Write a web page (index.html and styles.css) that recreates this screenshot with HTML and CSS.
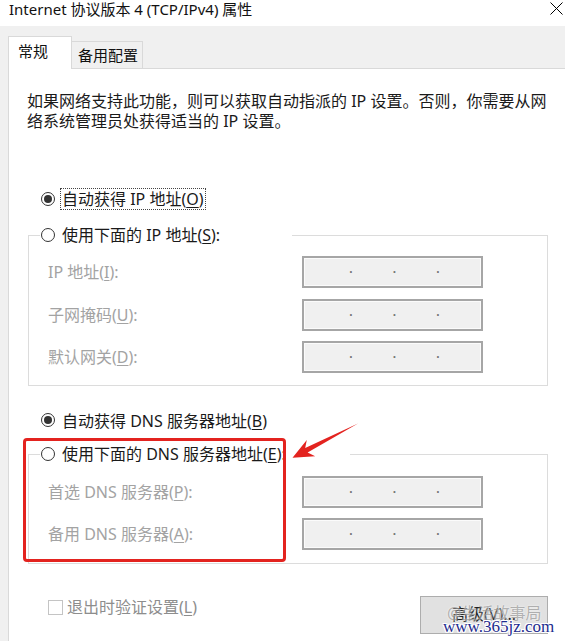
FILE: index.html
```html
<!DOCTYPE html>
<html lang="zh-CN">
<head>
<meta charset="utf-8">
<title>Internet 协议版本 4 (TCP/IPv4) 属性</title>
<link rel="stylesheet" href="styles.css">
</head>
<body>
<div class="window">
  <div class="titlebar">
    <span class="title">Internet 协议版本 4 (TCP/IPv4) 属性</span>
    <svg class="close" width="13" height="13" viewBox="0 0 13 13"><path d="M0.5 0.5 L12.5 12.5 M12.5 0.5 L0.5 12.5" stroke="#000" stroke-width="1" fill="none"/></svg>
  </div>
  <div class="tabstrip">
    <div class="tab active">常规</div>
    <div class="tab">备用配置</div>
  </div>
  <div class="panel">
    <p class="desc">如果网络支持此功能，则可以获取自动指派的 IP 设置。否则，你需要从网络系统管理员处获得适当的 IP 设置。</p>

    <div class="option first">
      <span class="radio checked"></span><span class="focus">自动获得 IP 地址(<u>O</u>)</span>
    </div>

    <fieldset class="group g1">
      <legend class="legend l1"><span class="radio"></span><span>使用下面的 IP 地址(<u>S</u>):</span></legend>
      <div class="fields">
        <span class="lbl">IP 地址(<u>I</u>):</span>
        <div class="ip"><span class="dot">.</span><span class="dot">.</span><span class="dot">.</span></div>
        <span class="lbl">子网掩码(<u>U</u>):</span>
        <div class="ip"><span class="dot">.</span><span class="dot">.</span><span class="dot">.</span></div>
        <span class="lbl">默认网关(<u>D</u>):</span>
        <div class="ip"><span class="dot">.</span><span class="dot">.</span><span class="dot">.</span></div>
      </div>
    </fieldset>

    <div class="option second">
      <span class="radio checked"></span><span>自动获得 DNS 服务器地址(<u>B</u>)</span>
    </div>

    <fieldset class="group g2">
      <legend class="legend l2"><span class="radio"></span><span>使用下面的 DNS 服务器地址(<u>E</u>):</span></legend>
      <div class="fields f2">
        <span class="lbl">首选 DNS 服务器(<u>P</u>):</span>
        <div class="ip"><span class="dot">.</span><span class="dot">.</span><span class="dot">.</span></div>
        <span class="lbl">备用 DNS 服务器(<u>A</u>):</span>
        <div class="ip"><span class="dot">.</span><span class="dot">.</span><span class="dot">.</span></div>
      </div>
    </fieldset>

    <div class="footer">
      <div class="check"><span class="box"></span><span>退出时验证设置(<u>L</u>)</span></div>
      <div class="btn">高级(<u>V</u>)...</div>
    </div>
  </div>

  <div class="redbox"></div>
  <svg class="arrow" width="80" height="50" viewBox="288 418 80 50">
    <polygon points="358,423.5 307.6,452.6 315.2,456.2 292.5,457.8 306.8,440 305.2,448" fill="#e3231f"/>
  </svg>
  <div class="wm-faint">@生活故事局</div>
  <div class="wm">www.365jz.com</div>
</div>
</body>
</html>
```
FILE: styles.css
```css
* { box-sizing: border-box; }
html, body {
  margin: 0;
  padding: 0;
}
body {
  width: 565px;
  height: 641px;
  overflow: hidden;
  background: #f0f0f0;
  font-family: "Noto Sans", "Noto Sans CJK SC", sans-serif;
  font-size: 16px;
  color: #1a1a1a;
}
u { text-decoration: underline; text-underline-offset: 2px; text-decoration-thickness: 1px; }

.window {
  position: relative;
  width: 565px;
  height: 641px;
}

.titlebar {
  height: 26px;
  background: #fff;
  display: flex;
  justify-content: space-between;
  align-items: flex-start;
  padding: 0 2px 0 9px;
}
.title {
  font-size: 15px;
  line-height: 18px;
  color: #111;
}
.close { margin-top: 2px; }

.tabstrip {
  height: 42px;
  display: flex;
  align-items: flex-end;
  padding-left: 8px;
}
.tab {
  font-size: 15px;
  line-height: 20px;
  color: #111;
}
.tab.active {
  width: 64px;
  height: 33px;
  background: #fff;
  border: 1px solid #d9d9d9;
  border-bottom: none;
  padding: 4px 0 0 9px;
  margin-bottom: -1px;
  position: relative;
  z-index: 1;
}
.tab:not(.active) {
  width: 71px;
  height: 27px;
  border: 1px solid #d9d9d9;
  border-left: none;
  border-bottom: none;
  background: #f0f0f0;
  padding: 3px 0 0 6px;
}

.panel {
  margin-left: 8px;
  height: 573px;
  background: #fff;
  border-top: 1px solid #d9d9d9;
  border-left: 1px solid #d9d9d9;
  padding: 22px 17px 0 19px;
}

.desc {
  margin: 0 0 0 -1px;
  line-height: 20px;
  width: 520px;
}

.option {
  display: flex;
  align-items: center;
  height: 22px;
  padding-left: 13px;
}
.option.first { margin-top: 57px; }
.option.second { margin-top: 23px; }

.radio {
  flex: none;
  width: 14px;
  height: 14px;
  border: 1px solid #333;
  border-radius: 50%;
  margin-right: 7px;
  display: inline-flex;
  align-items: center;
  justify-content: center;
  background: #fff;
}
.radio.checked::after {
  content: "";
  width: 8px;
  height: 8px;
  border-radius: 50%;
  background: #333;
}
.focus {
  outline: 1px dotted #444;
  outline-offset: 0;
  padding: 0 1px;
  line-height: 20px;
  margin-left: -1px;
}

.group {
  margin: 14px 0 0 0;
  padding: 0;
  width: 520px;
  border: 1px solid #dcdcdc;
  min-width: 0;
}
.group.g2 { margin-top: 12px; }

.legend {
  display: flex;
  align-items: center;
  height: 22px;
  line-height: 22px;
  padding: 0 0 0 1px;
  margin-left: 11px;
  background: #fff;
}
.l1 { width: 252px; }
.l2 { width: 310px; }

.fields {
  display: grid;
  grid-template-columns: 254px 181px;
  row-gap: 10.5px;
  align-items: center;
  padding: 10px 0 12px 19px;
}
.fields.f2 {
  row-gap: 10px;
  padding: 11px 0 13px 19px;
}
.lbl {
  color: #a3a3a3;
  line-height: 20px;
}
.lbl u { text-decoration-color: #a3a3a3; }

.ip {
  height: 32px;
  border: 2px solid #a6a6a6;
  box-shadow: inset 0 0 0 1px #fbfbfb;
  background: #f0f0f0;
  display: flex;
  align-items: center;
  padding-left: 45px;
  gap: 39.5px;
}
.dot {
  display: block;
  width: 4px;
  height: 10px;
  text-align: center;
  font-size: 12px;
  line-height: 10px;
  color: #777;
  margin-top: -6px;
  font-family: "Liberation Sans", sans-serif;
  font-weight: bold;
}

.footer {
  display: flex;
  align-items: flex-start;
  margin-top: 32px;
  width: 520px;
}
.check {
  display: flex;
  align-items: center;
  margin-top: 1px;
  padding-left: 20px;
  line-height: 20px;
  color: #8d8d8d;
}
.check u { text-decoration-color: #8d8d8d; }
.box {
  width: 15px;
  height: 15px;
  border: 1px solid #c4c4c4;
  background: #fff;
  margin-right: 4px;
}
.btn {
  margin-left: auto;
  width: 128px;
  height: 38px;
  background: #e1e1e1;
  border: 1px solid #adadad;
  display: flex;
  align-items: center;
  justify-content: center;
  line-height: 20px;
  padding-bottom: 2px;
}

.redbox {
  position: absolute;
  left: 23px;
  top: 438px;
  width: 263px;
  height: 124px;
  border: 3px solid #e3231f;
  border-radius: 4px;
}
.arrow {
  position: absolute;
  left: 288px;
  top: 418px;
}
.wm-faint {
  position: absolute;
  left: 447px;
  top: 603px;
  font-size: 16px;
  line-height: 20px;
  color: rgba(110, 110, 110, 0.5);
  text-shadow: 0 0 2px #fff;
}
.wm {
  position: absolute;
  left: 443px;
  top: 617px;
  font-family: "Liberation Serif", serif;
  font-size: 17px;
  line-height: 20px;
  color: #1d2b8e;
  text-shadow: 1px 0 0 #fff, -1px 0 0 #fff, 0 1px 0 #fff, 0 -1px 0 #fff, 1px 1px 0 #fff, -1px -1px 0 #fff, 1px -1px 0 #fff, -1px 1px 0 #fff;
}
```
